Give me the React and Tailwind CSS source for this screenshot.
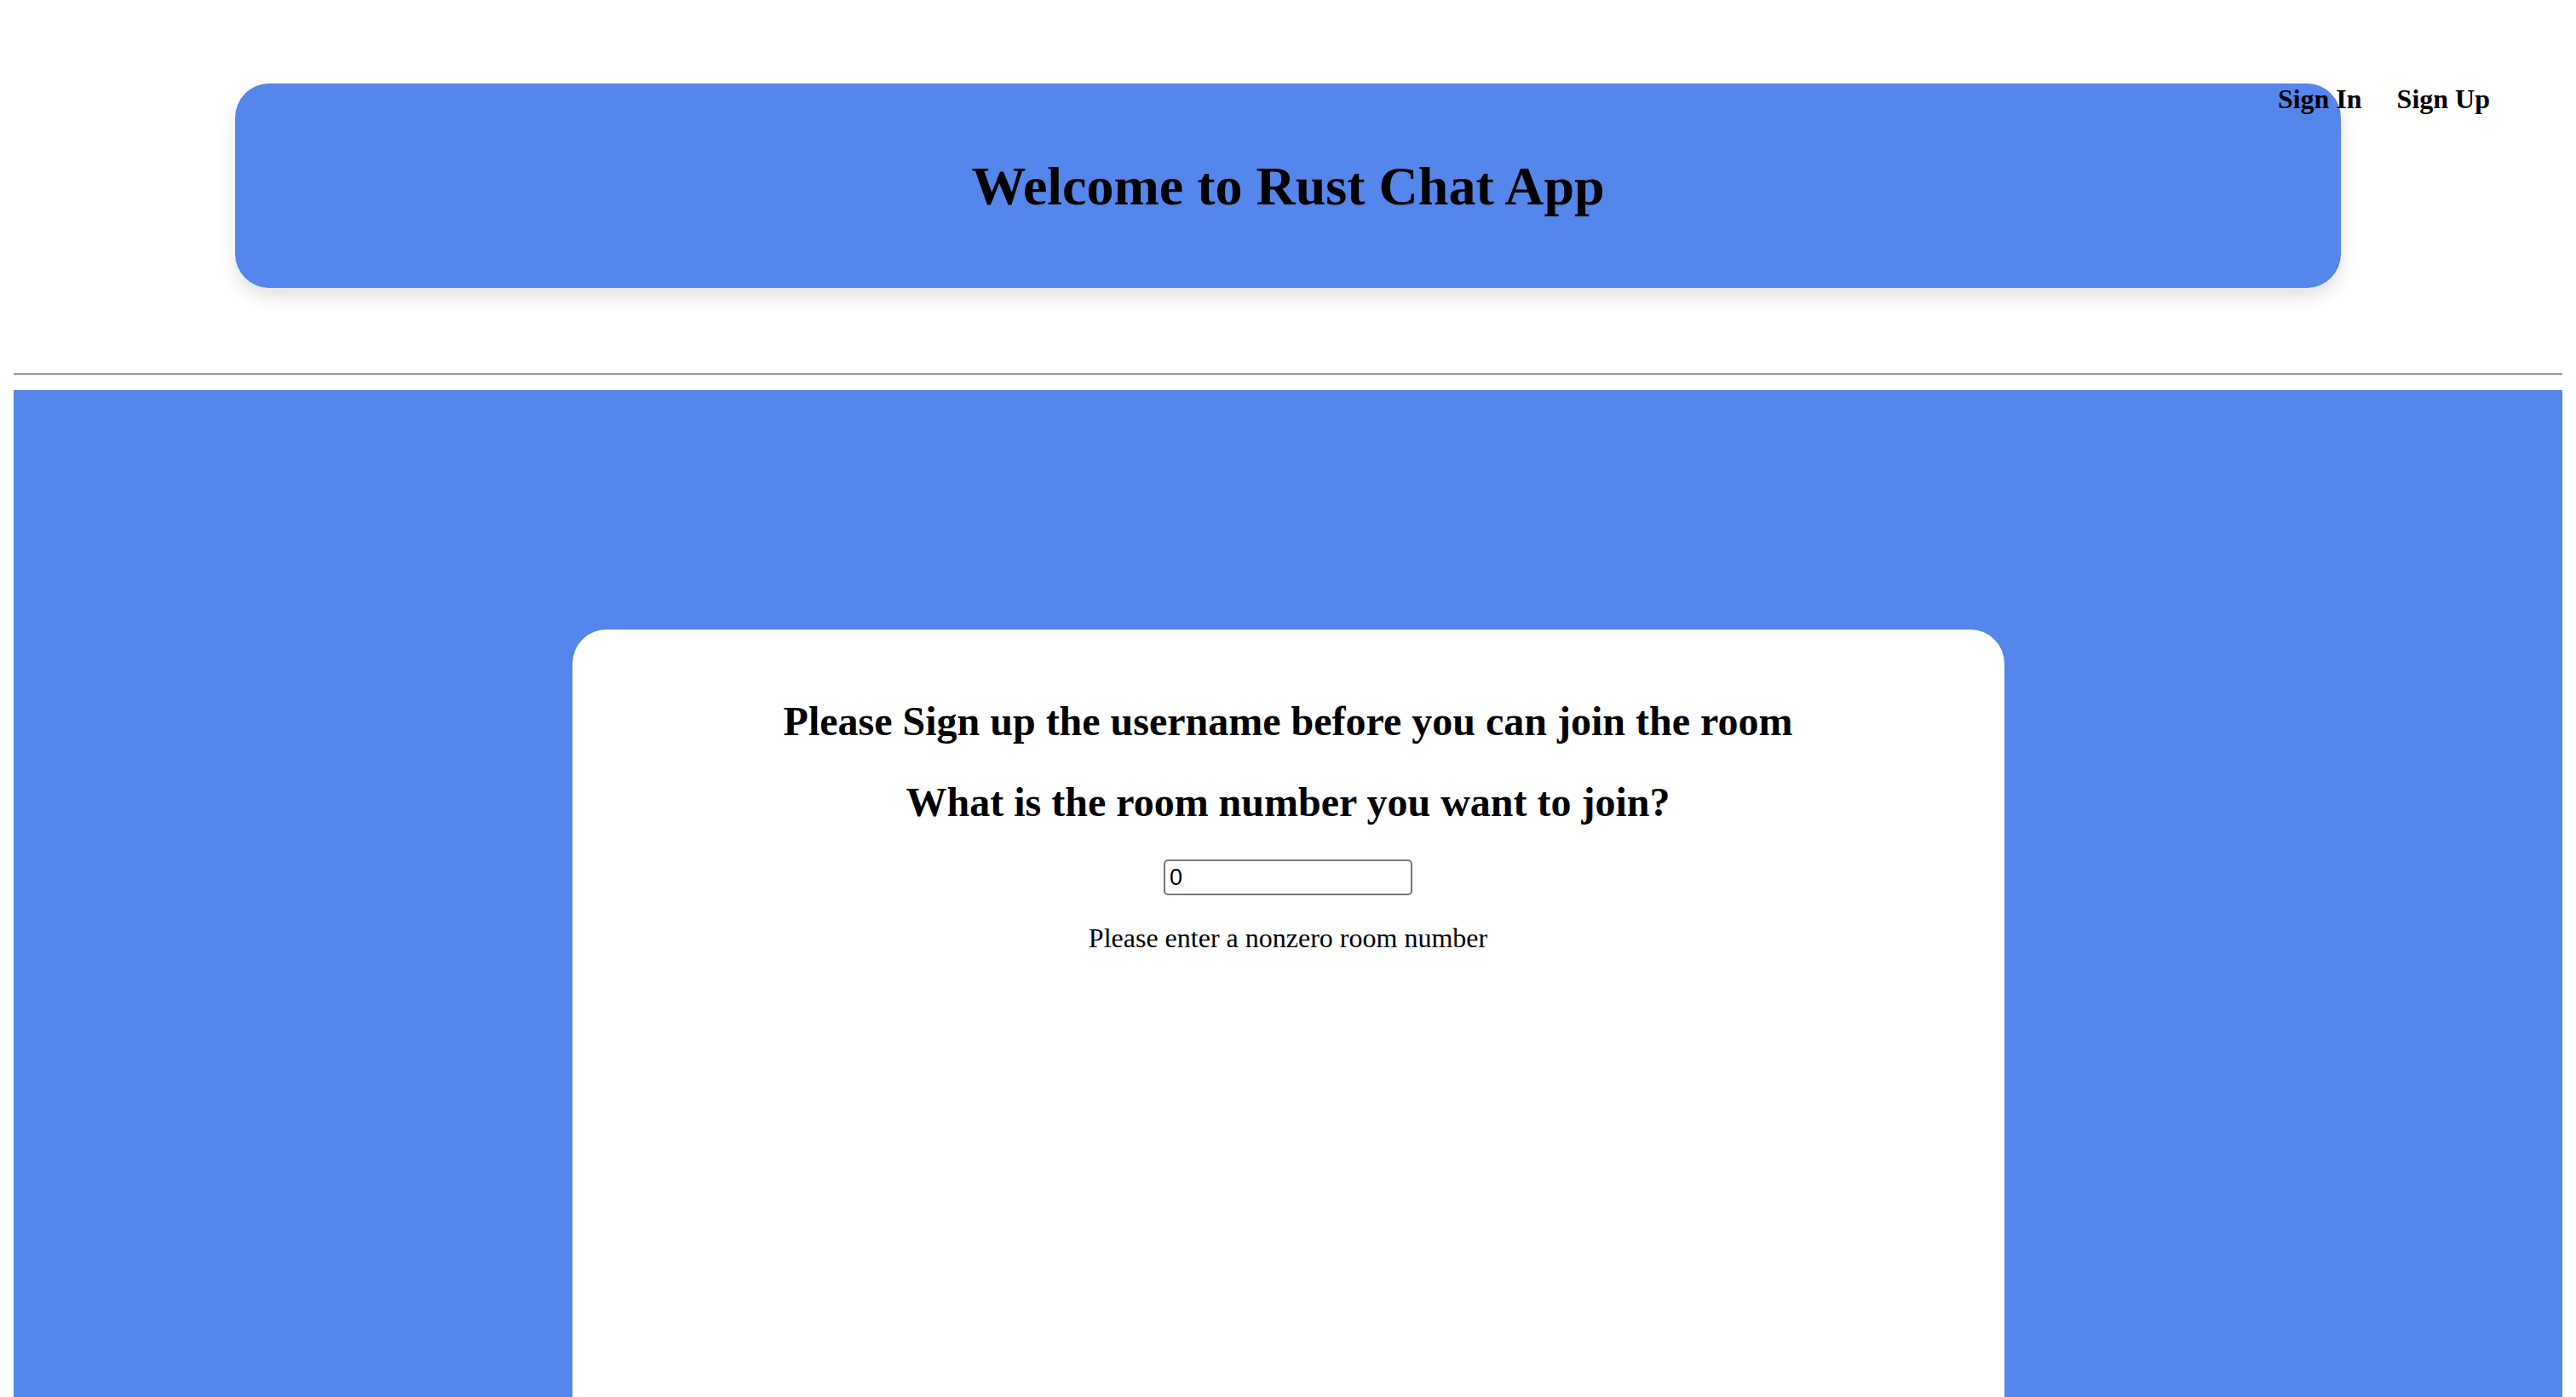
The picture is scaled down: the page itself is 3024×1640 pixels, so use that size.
import React, { useState } from "react";

export default function App() {
  const [room, setRoom] = useState("0");

  return (
    <div className="relative min-h-[1640px] overflow-hidden bg-white px-[16px] pt-[98px] font-['Liberation_Serif',serif] text-black">
      <nav className="absolute right-[101px] top-[98px] flex gap-[41px] text-[32px] font-bold leading-[36px]">
        <a className="cursor-pointer">Sign In</a>
        <a className="cursor-pointer">Sign Up</a>
      </nav>

      <header className="mx-[260px] flex h-[240px] items-center justify-center rounded-[40px] bg-[#5486eb] shadow-[0_10px_20px_rgba(0,0,0,0.12)]">
        <h1 className="text-[64px] font-bold leading-[71px]">
          Welcome to Rust Chat App
        </h1>
      </header>

      <div className="mt-[100px]">
        <div className="h-[2px] bg-[#9a9a9a]" />
        <div className="h-[1px] bg-[#ececec]" />
      </div>

      <main className="mt-[17px] h-[1182px] bg-[#5486eb] pt-[281px]">
        <div className="mx-auto h-[901px] w-[1681px] rounded-t-[40px] bg-white pt-[40px] text-center">
          <h2 className="my-[40px] text-[48px] font-bold leading-[55px]">
            Please Sign up the username before you can join the room
          </h2>
          <h2 className="my-[40px] text-[48px] font-bold leading-[55px]">
            What is the room number you want to join?
          </h2>
          <input
            type="number"
            value={room}
            onChange={(e) => setRoom(e.target.value)}
            className="mx-auto block h-[42px] w-[292px] rounded-[5px] border-2 border-[#767676] bg-white px-[5px] text-left font-['Liberation_Sans',sans-serif] text-[27px] leading-[36px] outline-none [appearance:textfield]"
          />
          <p className="mt-[32px] text-[32px] leading-[37px]">
            Please enter a nonzero room number
          </p>
        </div>
      </main>
    </div>
  );
}
